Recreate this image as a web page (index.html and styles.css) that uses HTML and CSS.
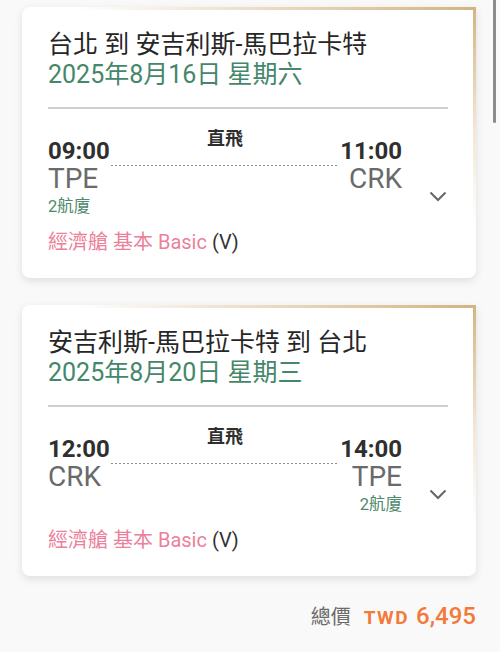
FILE: index.html
```html
<!DOCTYPE html>
<html lang="zh-Hant">
<head>
<meta charset="utf-8">
<title>行程</title>
<link rel="stylesheet" href="styles.css">
</head>
<body>
<div class="page">
  <div class="scrollbar"></div>

  <section class="card">
    <div class="route">台北 到 安吉利斯-馬巴拉卡特</div>
    <div class="date">2025年8月16日 星期六</div>
    <div class="divider"></div>
    <div class="flight">
      <div class="side">
        <div class="time">09:00</div>
        <div class="code">TPE</div>
        <div class="terminal">2航廈</div>
      </div>
      <div class="middle">
        <div class="direct">直飛</div>
        <div class="dash"></div>
      </div>
      <div class="side right">
        <div class="time">11:00</div>
        <div class="code">CRK</div>
      </div>
      <div class="toggle">
        <svg width="18" height="11" viewBox="0 0 18 11"><polyline points="1.5,1.5 9,9 16.5,1.5" fill="none" stroke="#666" stroke-width="2"/></svg>
      </div>
    </div>
    <div class="cabin"><span class="cabin-name">經濟艙 基本 Basic</span> (V)</div>
  </section>

  <section class="card">
    <div class="route">安吉利斯-馬巴拉卡特 到 台北</div>
    <div class="date">2025年8月20日 星期三</div>
    <div class="divider"></div>
    <div class="flight">
      <div class="side">
        <div class="time">12:00</div>
        <div class="code">CRK</div>
      </div>
      <div class="middle">
        <div class="direct">直飛</div>
        <div class="dash"></div>
      </div>
      <div class="side right">
        <div class="time">14:00</div>
        <div class="code">TPE</div>
        <div class="terminal">2航廈</div>
      </div>
      <div class="toggle">
        <svg width="18" height="11" viewBox="0 0 18 11"><polyline points="1.5,1.5 9,9 16.5,1.5" fill="none" stroke="#666" stroke-width="2"/></svg>
      </div>
    </div>
    <div class="cabin"><span class="cabin-name">經濟艙 基本 Basic</span> (V)</div>
  </section>

  <div class="total">
    <span class="total-label">總價</span>
    <span class="currency">TWD</span>
    <span class="amount">6,495</span>
  </div>
</div>
</body>
</html>
```

FILE: styles.css
```css
* { box-sizing: border-box; }

html, body {
  margin: 0;
  padding: 0;
  background: #f9f9f9;
}

body {
  font-family: "Roboto", "Noto Sans CJK TC", sans-serif;
  color: #333;
}

.page {
  position: relative;
  width: 500px;
  height: 652px;
  padding: 7px 24px 0 22px;
  overflow: hidden;
}

.scrollbar {
  position: absolute;
  left: 493px;
  top: 0;
  width: 3px;
  height: 123px;
  background: #8c8c8c;
  border-radius: 0 0 2px 2px;
}

.card {
  border-radius: 8px 0 8px 8px;
  padding: 21px 28px 24px 26px;
  background:
    linear-gradient(to right, rgba(214, 186, 138, 0) 12%, #d3b481 100%) top left / 100% 3px no-repeat,
    linear-gradient(to bottom, #d3b481 0%, rgba(230, 205, 170, 0.5) 45%, rgba(230, 205, 170, 0) 80%) top right / 3px 100% no-repeat,
    #fff;
  box-shadow: 0 3px 9px rgba(0, 0, 0, 0.11);
}

.card + .card {
  margin-top: 27px;
}

.route {
  font-size: 25px;
  line-height: 30px;
  color: #262626;
  padding-top: 2px;
}

.date {
  font-size: 25px;
  line-height: 30px;
  color: #45876a;
}

.divider {
  height: 2px;
  background: #cfcfcf;
  margin-top: 17px;
}

.flight {
  display: grid;
  grid-template-columns: auto 1fr auto 46px;
  align-items: start;
  margin-top: 20px;
}

.side {
  padding-top: 8px;
}

.side.right {
  text-align: right;
}

.time {
  font-size: 24px;
  line-height: 28px;
  font-weight: 700;
  color: #2f2f2f;
}

.code {
  font-size: 28px;
  line-height: 28px;
  color: #6a6a6a;
}

.terminal {
  font-size: 16.5px;
  line-height: 22px;
  color: #4f8a6d;
  margin-top: 3px;
}

.middle {
  padding: 0 1px;
  text-align: center;
}

.direct {
  font-size: 18px;
  line-height: 20px;
  font-weight: 700;
  color: #2f2f2f;
}

.dash {
  height: 1px;
  margin-top: 16px;
  background: repeating-linear-gradient(to right, #8f8f8f 0 2px, transparent 2px 4px);
}

.toggle {
  display: flex;
  justify-content: flex-end;
  padding-top: 62px;
  padding-right: 1px;
}

.toggle svg {
  display: block;
}

.cabin {
  margin-top: 12px;
  font-size: 20px;
  line-height: 24px;
  color: #333;
}

.cabin-name {
  color: #ec7f9b;
}

.total {
  display: flex;
  justify-content: flex-end;
  align-items: baseline;
  margin-top: 25px;
  line-height: 30px;
}

.total-label {
  font-size: 20px;
  color: #6a6a6a;
  margin-right: 13px;
}

.currency {
  font-size: 19px;
  font-weight: 700;
  letter-spacing: 1.5px;
  color: #f27a3a;
  margin-right: 7px;
}

.amount {
  font-size: 24px;
  font-weight: 500;
  color: #f27a3a;
}
```
